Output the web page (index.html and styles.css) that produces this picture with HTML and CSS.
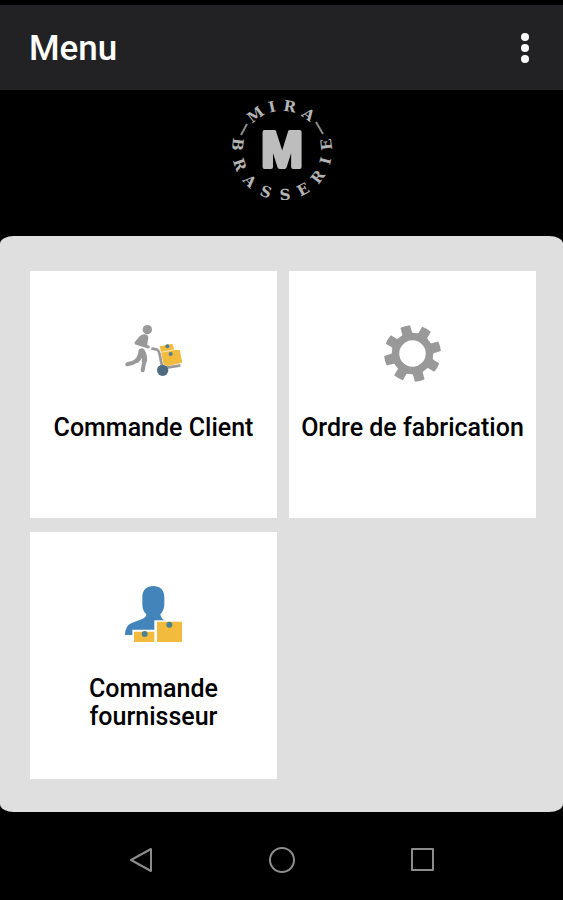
FILE: index.html
```
<!DOCTYPE html>
<html lang="fr">
<head>
    <meta charset="UTF-8">
    <meta name="viewport" content="width=device-width, initial-scale=1.0">
    <title>Menu</title>
    <link rel="stylesheet" href="styles.css">
</head>
<body>

    <header class="app-bar">
        <h1>Menu</h1>
        <button class="more" type="button" aria-label="Plus d'options">
            <svg width="12" height="32" viewBox="0 0 12 32" fill="#fff">
                <circle cx="6" cy="5" r="4"/>
                <circle cx="6" cy="16" r="4"/>
                <circle cx="6" cy="27" r="4"/>
            </svg>
        </button>
    </header>

    <div class="brand">
        <svg class="logo" viewBox="0 0 110 110" role="img" aria-label="Mira Brasserie">
            <text class="logo-big" x="55" y="72">M</text>
            <!-- haut du cercle -->
            <g class="logo-ring">
                <text x="55" y="16" transform="rotate(-37 55 55)">M</text>
                <text x="55" y="16" transform="rotate(-13 55 55)">I</text>
                <text x="55" y="16" transform="rotate(10 55 55)">R</text>
                <text x="55" y="16" transform="rotate(37 55 55)">A</text>
            </g>
            <path class="logo-dash" d="M14 40l6-11M89 27l7 12"/>
            <!-- bas du cercle -->
            <g class="logo-ring">
                <text x="55" y="105" transform="rotate(97 55 55)">B</text>
                <text x="55" y="105" transform="rotate(71 55 55)">R</text>
                <text x="55" y="105" transform="rotate(46 55 55)">A</text>
                <text x="55" y="105" transform="rotate(21 55 55)">S</text>
                <text x="55" y="105" transform="rotate(-4 55 55)">S</text>
                <text x="55" y="105" transform="rotate(-28 55 55)">E</text>
                <text x="55" y="105" transform="rotate(-53 55 55)">R</text>
                <text x="55" y="105" transform="rotate(-76 55 55)">I</text>
                <text x="55" y="105" transform="rotate(-97 55 55)">E</text>
            </g>
        </svg>
    </div>

    <main class="panel">
        <a class="tile" href="#client">
            <svg class="tile-icon" viewBox="0 0 171 171" aria-hidden="true">
                <circle cx="67" cy="14" r="14" fill="#999"/>
                <path fill="#999" d="M43 35q8-8 16-7 11 1 11 11l-4 24-24-6-8-6z"/>
                <g fill="none" stroke="#999" stroke-linecap="round" stroke-linejoin="round">
                    <path stroke-width="9" d="M47 37L33 54l37 12"/>
                    <path stroke-width="15" d="M48 78q-2 20-12 28"/>
                    <path stroke-width="12" d="M36 107q-12 8-29 11"/>
                    <path stroke-width="15" d="M52 78q9 16 6 30"/>
                    <path stroke-width="12" d="M58 108l-5 28"/>
                    <path stroke-width="8" d="M82 71l14 3q5 2 7 10l8 38M125 128l38-6"/>
                </g>
                <path fill="#f2bb3d" d="M104 64l38-8 6 18 16 1 8 38-44 10-12-4z"/>
                <path fill="none" stroke="#fff" stroke-width="2" d="M107 82l42-8"/>
                <circle cx="127" cy="64" r="6" fill="#4a7f96"/>
                <circle cx="137" cy="87" r="6" fill="#4a7f96"/>
                <circle cx="113" cy="136" r="17" fill="#4f6b80"/>
            </svg>
            <span class="tile-label">Commande Client</span>
        </a>

        <a class="tile" href="#fabrication">
            <svg class="tile-icon" viewBox="0 0 114 114" aria-hidden="true">
                <circle cx="57" cy="57" r="34" fill="none" stroke="#999" stroke-width="15"/>
                <g fill="#999" transform="rotate(-15 57 57)">
                    <path id="tooth" d="M44 20q4-3 3-9V1q9-2 20 0v10q-1 6 3 9z"/>
                    <use href="#tooth" transform="rotate(45 57 57)"/>
                    <use href="#tooth" transform="rotate(90 57 57)"/>
                    <use href="#tooth" transform="rotate(135 57 57)"/>
                    <use href="#tooth" transform="rotate(180 57 57)"/>
                    <use href="#tooth" transform="rotate(225 57 57)"/>
                    <use href="#tooth" transform="rotate(270 57 57)"/>
                    <use href="#tooth" transform="rotate(315 57 57)"/>
                </g>
            </svg>
            <span class="tile-label">Ordre de fabrication</span>
        </a>

        <a class="tile" href="#fournisseur">
            <svg class="tile-icon" viewBox="0 0 171 171" aria-hidden="true">
                <path fill="#4385bb" d="M52 34C52 10 66 0 85 0s33 10 33 34v20c0 14-5 24-12 31 2 12 8 17 20 21l20 8v33H0q0-28 20-36l30-11q14-6 14-15c-8-8-12-17-12-31z"/>
                <path fill="#fff" d="M22 131h66v-28h84v68H22z"/>
                <path fill="#f2bb3d" d="M27 137h61v31H27zM96 107h75v61H96z"/>
                <circle cx="59" cy="144" r="9" fill="#4b8291"/>
                <circle cx="133" cy="116" r="9" fill="#4b8291"/>
            </svg>
            <span class="tile-label">Commande fournisseur</span>
        </a>
    </main>

    <nav class="nav-bar">
        <button type="button" aria-label="Retour">
            <svg width="28" height="28" viewBox="0 0 28 28"><path d="M24 3v22L4 14z"/></svg>
        </button>
        <button type="button" aria-label="Accueil">
            <svg width="28" height="28" viewBox="0 0 28 28"><circle cx="14" cy="14" r="12"/></svg>
        </button>
        <button type="button" aria-label="Applications">
            <svg width="28" height="28" viewBox="0 0 28 28"><path d="M3 3h21v21H3z"/></svg>
        </button>
    </nav>

</body>
</html>
```
FILE: styles.css
```
* {
    box-sizing: border-box;
}
body {
    margin: 0;
    min-height: 100vh;
    display: flex;
    flex-direction: column;
    background-color: #000;
    font-family: Roboto, "Liberation Sans", sans-serif;
}
button {
    padding: 0;
    border: none;
    background: none;
    cursor: pointer;
}
svg {
    display: block;
}

/* barre du haut */
.app-bar {
    display: flex;
    align-items: center;
    justify-content: space-between;
    min-height: 90px;
    padding: 0 32px 0 29px;
    border-top: 5px solid #000;
    background-color: #222224;
}
.app-bar h1 {
    margin: 0;
    padding-top: 2px;
    font-size: 35px;
    font-weight: 500;
    line-height: 40px;
    color: #fff;
}

/* logo */
.brand {
    display: flex;
    justify-content: center;
    padding: 5px 0 31px;
}
.logo {
    width: 110px;
    height: 110px;
}
.logo-ring {
    fill: #b4b4b4;
    font-family: "DejaVu Serif", serif;
    font-size: 15px;
    font-weight: bold;
    text-anchor: middle;
}
.logo-big {
    fill: #bdbdbd;
    stroke: #bdbdbd;
    stroke-width: 4px;
    stroke-linejoin: round;
    font-family: "Liberation Sans", sans-serif;
    font-size: 50px;
    font-weight: bold;
    text-anchor: middle;
}
.logo-dash {
    fill: none;
    stroke: #8a8a8a;
    stroke-width: 2px;
}

/* tuiles */
.panel {
    display: grid;
    grid-template-columns: 1fr 1fr;
    gap: 14px 12px;
    padding: 35px 27px 33px 30px;
    border-radius: 14px / 8px;
    background-color: #dfdfdf;
}
.tile {
    display: flex;
    flex-direction: column;
    align-items: center;
    gap: 32px;
    aspect-ratio: 1;
    padding: 54px 8px 0;
    background-color: #fff;
    color: #000;
    text-decoration: none;
}
.tile-icon {
    width: 57px;
    height: 57px;
    flex: none;
}
.tile-label {
    font-size: 25px;
    font-weight: 500;
    line-height: 28px;
    text-align: center;
}

/* barre de navigation */
.nav-bar {
    flex: 1;
    display: grid;
    grid-template-columns: repeat(3, 1fr);
    align-items: center;
    justify-items: center;
    min-height: 88px;
    padding: 8px 70px 0;
}
.nav-bar svg {
    fill: none;
    stroke: #8c8c8c;
    stroke-width: 2px;
    stroke-linejoin: round;
}
```
